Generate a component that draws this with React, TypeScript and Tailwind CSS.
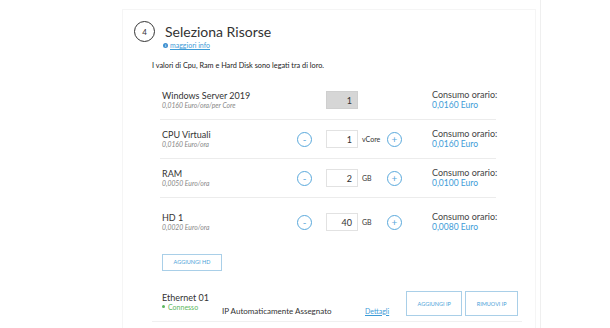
import React from 'react';

const rows = [
  { id: 1, name: 'Windows Server 2019', price: '0,0160 Euro/ora/per Core', value: '1', unit: '', total: '0,0160 Euro', locked: true },
  { id: 2, name: 'CPU Virtuali', price: '0,0160 Euro/ora', value: '1', unit: 'vCore', total: '0,0160 Euro', locked: false },
  { id: 3, name: 'RAM', price: '0,0050 Euro/ora', value: '2', unit: 'GB', total: '0,0100 Euro', locked: false },
];

function RoundBtn({ sign, hidden }: { sign: string; hidden?: boolean }) {
  return (
    <div
      className={`w-[15px] h-[15px] shrink-0 rounded-full border border-[#5aa9dc] text-[#5aa9dc] flex items-center justify-center text-[10px] leading-none ${hidden ? 'invisible' : ''}`}
    >
      {sign}
    </div>
  );
}

function ResourceRow({ name, price, value, unit, total, locked, last }: {
  name: string; price: string; value: string; unit: string; total: string; locked?: boolean; last?: boolean;
}) {
  return (
    <div className={`flex items-center ${last ? 'h-[48px]' : 'h-[39px] border-b border-[#ececec]'}`}>
      <div className="w-[137px] pl-[2px] shrink-0">
        <div className="text-[9px] leading-[10px] text-[#333]">{name}</div>
        <div className="text-[6.8px] leading-[8px] italic text-[#888] whitespace-nowrap">{price}</div>
      </div>
      <RoundBtn sign="-" hidden={locked} />
      <div
        className={`ml-[14px] w-[32px] h-[18px] shrink-0 border text-right pr-[5px] text-[9px] leading-[17px] text-[#333] ${locked ? 'bg-[#d6d6d6] border-[#cfcfcf]' : 'bg-white border-[#e2e2e2]'}`}
      >
        {value}
      </div>
      <div className="ml-[4px] w-[25px] shrink-0 text-[7px] text-[#333]">{unit}</div>
      <RoundBtn sign="+" hidden={locked} />
      <div className="ml-[30px] whitespace-nowrap shrink-0">
        <div className="text-[9px] leading-[10px] text-[#444]">Consumo orario:</div>
        <div className="text-[8.5px] leading-[10px] text-[#3d9bd7]">{total}</div>
      </div>
    </div>
  );
}

export default function App() {
  return (
    <div className="w-[610px] h-[328px] bg-white overflow-hidden flex font-['Lato',sans-serif]">
      <div className="w-[541px] h-full shrink-0 border-r border-[#efefef] pt-[9px] pl-[122px]">
        <div className="w-[414px] h-[340px] border border-[#f5f5f5]">
          <div className="flex items-center mt-[11px] ml-[11px] h-[21px]">
            <div className="w-[21px] h-[21px] rounded-full border border-[#333] flex items-center justify-center text-[8px] text-[#333]">
              4
            </div>
            <div className="ml-[10px] text-[14px] leading-[16px] text-[#333]">Seleziona Risorse</div>
          </div>
          <div className="flex items-center ml-[40px] mt-[-1px] h-[8px]">
            <span className="w-[5px] h-[5px] rounded-full bg-[#3d8fd0] text-white text-[4px] leading-[5px] text-center font-bold">i</span>
            <a className="ml-[2px] text-[7px] leading-[8px] text-[#3d9bd7] underline">maggiori info</a>
          </div>
          <div className="ml-[29px] mt-[12px] text-[7.3px] leading-[10px] text-[#222]">
            I valori di Cpu, Ram e Hard Disk sono legati tra di loro.
          </div>
          <div className="ml-[37px] mt-[10px] w-[336px]">
            {rows.map((r) => (
              <ResourceRow key={r.id} {...r} />
            ))}
            <ResourceRow name="HD 1" price="0,0020 Euro/ora" value="40" unit="GB" total="0,0080 Euro" last />
            <button className="mt-[4px] ml-[2px] w-[60px] h-[17px] border border-[#a9cfe8] text-[5.5px] text-[#4a9fd8] uppercase">
              Aggiungi HD
            </button>
          </div>
          <div className="ml-[29px] mt-[16px] w-[370px] h-[35px] border-b border-[#f0f0f0] flex items-center pl-[10px]">
            <div className="w-[60px] shrink-0 mb-[4px]">
              <div className="text-[9px] leading-[10px] text-[#333]">Ethernet 01</div>
              <div className="flex items-center text-[7px] leading-[8px] text-[#5cb85c]">
                <span className="w-[3px] h-[3px] rounded-full bg-[#5cb85c] mr-[3px]" />
                Connesso
              </div>
            </div>
            <div className="mt-[14px] text-[8px] leading-[10px] text-[#333] w-[109px] shrink-0 whitespace-nowrap">
              IP Automaticamente Assegnato
            </div>
            <a className="ml-[34px] mt-[14px] text-[7px] leading-[10px] text-[#3d9bd7] underline">Dettagli</a>
            <button className="ml-[17px] w-[56px] h-[25px] border border-[#a9cfe8] text-[5.5px] text-[#4a9fd8] uppercase">
              Aggiungi IP
            </button>
            <button className="ml-[3px] w-[53px] h-[25px] border border-[#a9cfe8] text-[5.5px] text-[#4a9fd8] uppercase">
              Rimuovi IP
            </button>
          </div>
        </div>
      </div>
    </div>
  );
}
